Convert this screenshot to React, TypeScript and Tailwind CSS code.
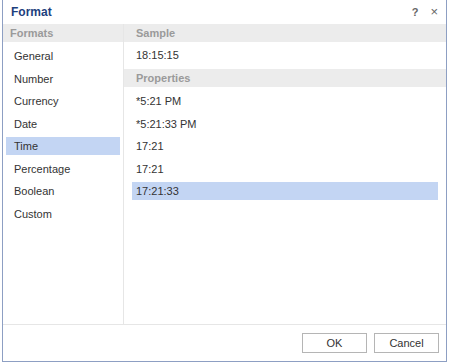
import React from "react";

const formats = ["General", "Number", "Currency", "Date", "Time", "Percentage", "Boolean", "Custom"];
const props = ["*5:21 PM", "*5:21:33 PM", "17:21", "17:21", "17:21:33"];

export default function App() {
  return (
    <div className="w-[450px] h-[364px] bg-white" style={{ fontFamily: '"Liberation Sans", Arial, sans-serif' }}>
      <div className="ml-[2px] w-[445px] h-[362px] border-l border-r border-b border-[#8d9fc3] flex flex-col">
        <div className="h-[24px] flex items-center justify-between pl-[8px] pr-[8px] shrink-0">
          <span className="text-[12px] font-bold text-[#1d3f7d]">Format</span>
          <div className="flex items-center gap-[12px] text-[#666] text-[11px] font-bold">
            <span>?</span>
            <span className="text-[13px] font-normal">×</span>
          </div>
        </div>
        <div className="flex flex-1 border-b border-[#e6e6e6]">
          <div className="w-[121px] border-r border-[#e6e6e6] flex flex-col shrink-0">
            <div className="h-[18px] bg-[#ececec] flex items-center pl-[7px] text-[11px] font-bold text-[#9a9a9a]">Formats</div>
            <div className="pt-[3px] px-[3px]">
              {formats.map((f) => (
                <div key={f} className="h-[22.5px] flex items-center">
                  <div className={`w-full h-[18px] flex items-center pl-[8px] text-[11px] text-[#333] ${f === "Time" ? "bg-[#c3d5f3]" : ""}`}>{f}</div>
                </div>
              ))}
            </div>
          </div>
          <div className="flex-1 flex flex-col">
            <div className="h-[18px] bg-[#ececec] flex items-center pl-[12px] text-[11px] font-bold text-[#9a9a9a]">Sample</div>
            <div className="h-[27px] flex items-center pl-[12px] text-[11px] text-[#333]">18:15:15</div>
            <div className="h-[18px] bg-[#ececec] flex items-center pl-[12px] text-[11px] font-bold text-[#9a9a9a]">Properties</div>
            <div className="pt-[3px] pl-[8px] pr-[8px]">
              {props.map((p, i) => (
                <div key={i} className="h-[22.5px] flex items-center">
                  <div className={`w-full h-[18px] flex items-center pl-[4px] text-[11px] text-[#333] ${i === 4 ? "bg-[#c3d5f3]" : ""}`}>{p}</div>
                </div>
              ))}
            </div>
          </div>
        </div>
        <div className="h-[36px] flex items-center justify-end gap-[7px] pr-[7px] shrink-0">
          <button className="w-[65px] h-[20px] border border-[#b5b5b5] bg-white text-[11px] text-[#333]">OK</button>
          <button className="w-[65px] h-[20px] border border-[#b5b5b5] bg-white text-[11px] text-[#333]">Cancel</button>
        </div>
      </div>
    </div>
  );
}
